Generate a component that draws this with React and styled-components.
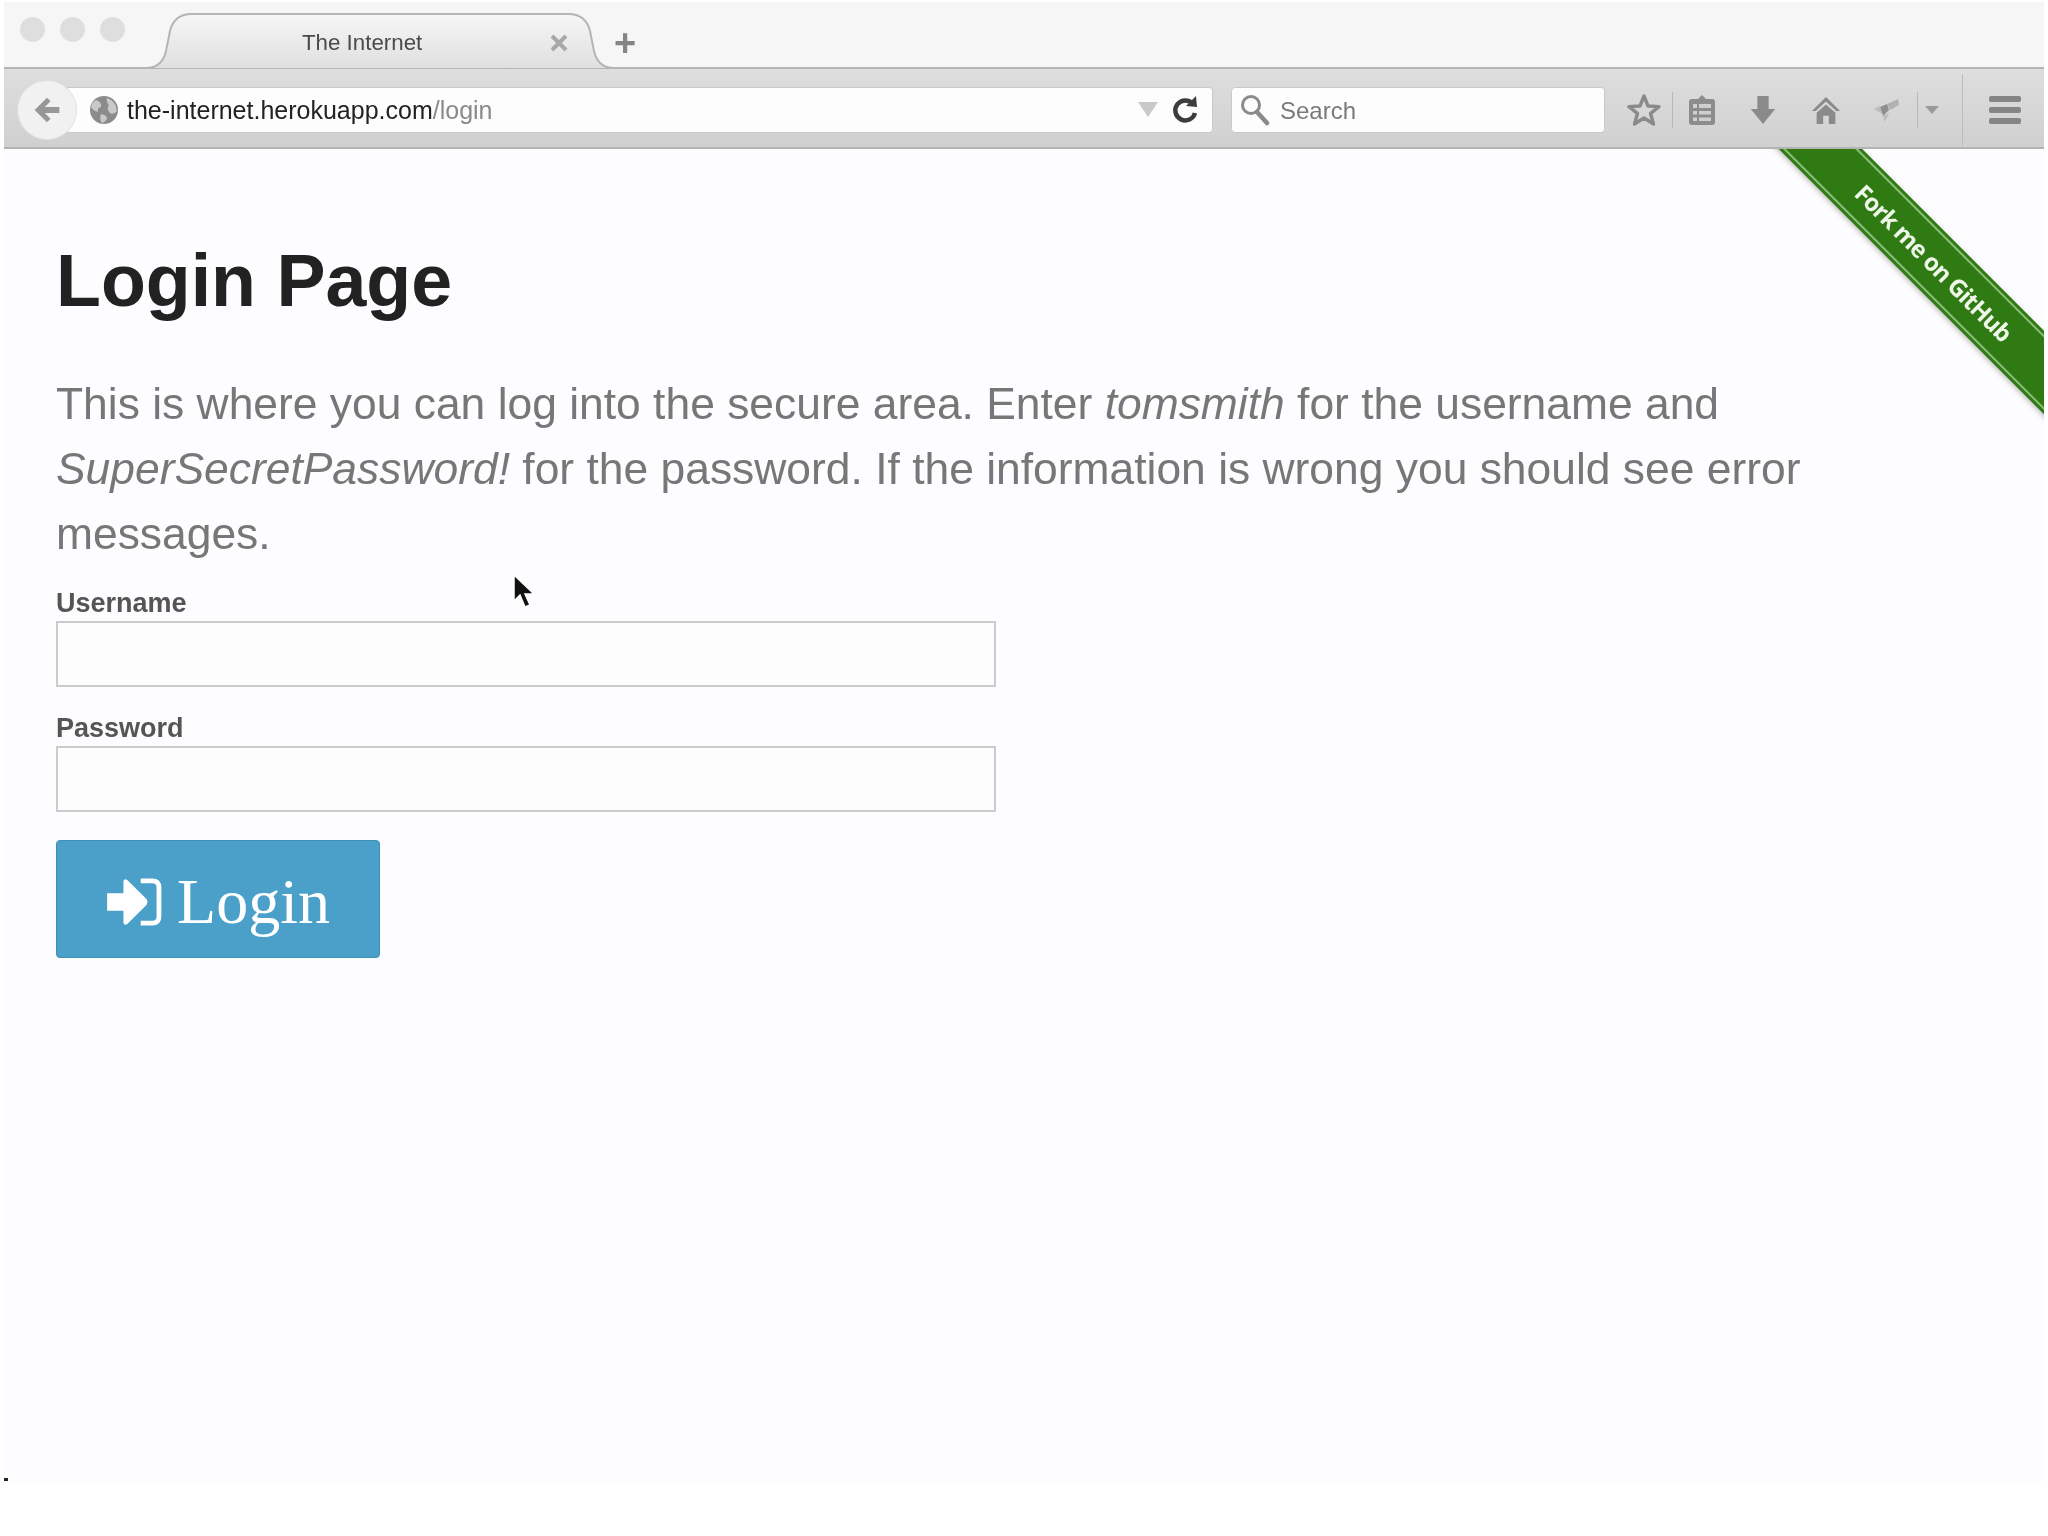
import React from "react";
import styled, { createGlobalStyle } from "styled-components";

const GlobalStyle = createGlobalStyle`
  html, body {
    margin: 0;
    padding: 0;
    background: #ffffff;
  }
  * {
    box-sizing: border-box;
  }
`;

const Arrow = ({ color = "#979797" }) => (
  <svg width="30" height="30" viewBox="0 0 34 34">
    <path d="M17 3 L3 17 L17 31 L21 27 L14.5 20.5 H31 V13.5 H14.5 L21 7 Z" fill={color} />
  </svg>
);

const Globe = () => (
  <svg width="30" height="30" viewBox="0 0 30 30">
    <circle cx="15" cy="15" r="14" fill="#8b8b8b" />
    <path d="M7 5 Q13 7 12 12 Q8 13 9 17 Q4 16 2 12 Q3 7 7 5 Z M18 3 Q27 6 28 16 Q25 20 21 18 Q17 14 20 10 Q17 7 18 3 Z M12 19 Q18 20 18 24 Q15 28 13 28 Q10 24 12 19 Z" fill="#c9c9c9" />
  </svg>
);

const Reload = () => (
  <svg width="26" height="28" viewBox="0 0 26 28">
    <path d="M21 8 A10 10 0 1 0 23 17" fill="none" stroke="#3d3d3d" strokeWidth="4.5" />
    <path d="M14 10 L25 11 L24 0 Z" fill="#3d3d3d" />
  </svg>
);

const Magnifier = () => (
  <svg width="30" height="32" viewBox="0 0 30 32">
    <circle cx="11" cy="11" r="8.5" fill="none" stroke="#8a8a8a" strokeWidth="3" />
    <path d="M17 18 L27 29" stroke="#8a8a8a" strokeWidth="4.5" strokeLinecap="round" />
  </svg>
);

const Star = () => (
  <svg width="34" height="34" viewBox="0 0 34 34">
    <path d="M17 3 L21 13 L32 13.6 L23.5 20.5 L26.5 31 L17 25 L7.5 31 L10.5 20.5 L2 13.6 L13 13 Z" fill="none" stroke="#8a8a8a" strokeWidth="3.4" strokeLinejoin="round" />
  </svg>
);

const Clipboard = () => (
  <svg width="28" height="32" viewBox="0 0 28 32">
    <path d="M10 5 L14 1 L18 5 H24 Q27 5 27 8 V28 Q27 31 24 31 H4 Q1 31 1 28 V8 Q1 5 4 5 Z" fill="#8c8c8c" />
    <path d="M5 10 H23 V14 H5 Z M5 17 H23 V20.5 H5 Z M5 23.5 H23 V27 H5 Z" fill="#cfcfcf" />
    <path d="M10 9 V28" stroke="#8c8c8c" strokeWidth="2" />
  </svg>
);

const Download = () => (
  <svg width="28" height="30" viewBox="0 0 28 32">
    <path d="M8 1 H20 V15 H27 L14 31 L1 15 H8 Z" fill="#8a8a8a" />
  </svg>
);

const Home = () => (
  <svg width="30" height="30" viewBox="0 0 32 32">
    <path d="M16 2 L31 17 L27 17 L16 7 L5 17 L1 17 Z" fill="#8a8a8a" />
    <path d="M16 10 L26 19 V31 H19 V22 H13 V31 H6 V19 Z" fill="#8a8a8a" />
  </svg>
);

const ExtensionMark = () => (
  <svg width="30" height="28" viewBox="0 0 30 28">
    <path d="M8 11 L15 8 L17 14 L11 20 Z" fill="#8f8f8f" />
    <path d="M15 8 L26 3 L27 9 L18 14 Z" fill="#b2b2b2" />
    <path d="M2 13 L8 10 L10 18 Z M11 20 L17 17 L13 26 Z" fill="#bcbcbc" />
  </svg>
);

const Cursor = () => (
  <svg width="22" height="36" viewBox="0 0 22 36">
    <path d="M1 1 L1 27 L7 21 L12 33 L17 31 L12 20 L21 20 Z" fill="#111" stroke="#fff" strokeWidth="1.5" />
  </svg>
);

const SignIn = () => (
  <svg width="56" height="48" viewBox="0 0 58 50">
    <path d="M1 16 H18 V3 Q19 0 22 2 L42 22 Q44 25 42 28 L22 48 Q19 50 18 47 V34 H1 Z" fill="#ffffff" />
    <path d="M36 3 H48 Q55 3 55 10 V40 Q55 47 48 47 H36" fill="none" stroke="#ffffff" strokeWidth="5" />
  </svg>
);

const CloseCross = () => (
  <svg width="18" height="18" viewBox="0 0 18 18">
    <path d="M2 2 L16 16 M16 2 L2 16" stroke="#a8a8a8" strokeWidth="4" />
  </svg>
);

const App = () => {
  return (
    <Window>
      <GlobalStyle />
      <TabStrip>
        <Lights>
          <Light />
          <Light />
          <Light />
        </Lights>
        <Tab>
          <TabShape viewBox="0 0 468 56" preserveAspectRatio="none">
            <defs>
              <linearGradient id="tabFill" x1="0" y1="0" x2="0" y2="1">
                <stop offset="0" stopColor="#f7f7f7" />
                <stop offset="1" stopColor="#dfdfdf" />
              </linearGradient>
            </defs>
            <path
              d="M0 55 Q16 55 20 38 L24 18 Q28 1 46 1 H422 Q440 1 444 18 L448 38 Q452 55 468 55"
              fill="url(#tabFill)"
              stroke="#b5b5b5"
              strokeWidth="2"
            />
          </TabShape>
          <TabTitle>The Internet</TabTitle>
          <TabClose>
            <CloseCross />
          </TabClose>
        </Tab>
        <NewTab>+</NewTab>
      </TabStrip>

      <Toolbar>
        <BackButton>
          <Arrow />
        </BackButton>
        <AddressBar>
          <Globe />
          <Url>
            the-internet.herokuapp.com<UrlPath>/login</UrlPath>
          </Url>
          <UrlDrop />
          <Reload />
        </AddressBar>
        <SearchBar>
          <Magnifier />
          <SearchText>Search</SearchText>
        </SearchBar>
        <Tools>
          <ToolSlot $width={56}>
            <Star />
          </ToolSlot>
          <ThinLine />
          <ToolSlot $width={58}>
            <Clipboard />
          </ToolSlot>
          <ToolSlot $width={64}>
            <Download />
          </ToolSlot>
          <ToolSlot $width={62}>
            <Home />
          </ToolSlot>
          <ToolSlot $width={60}>
            <ExtensionMark />
          </ToolSlot>
          <ThinLine />
          <ToolSlot $width={28}>
            <SmallDrop />
          </ToolSlot>
          <MenuLine />
          <MenuSlot>
            <MenuBar />
            <MenuBar />
            <MenuBar />
          </MenuSlot>
        </Tools>
      </Toolbar>

      <Page>
        <Ribbon>
          <RibbonText>Fork me on GitHub</RibbonText>
        </Ribbon>
        <Pointer>
          <Cursor />
        </Pointer>
        <Heading>Login Page</Heading>
        <Intro>
          This is where you can log into the secure area. Enter <em>tomsmith</em> for the
          username and <em>SuperSecretPassword!</em> for the password. If the information is
          wrong you should see error messages.
        </Intro>
        <Field>
          <Label>Username</Label>
          <TextBox />
        </Field>
        <Field>
          <Label>Password</Label>
          <TextBox />
        </Field>
        <LoginButton>
          <SignIn />
          Login
        </LoginButton>
        <Speck />
      </Page>
    </Window>
  );
};

export default App;

const Window = styled.div`
  width: 2048px;
  height: 1536px;
  padding: 2px 4px 0;
  background: #ffffff;
  overflow: hidden;
  font-family: "Liberation Sans", Arial, sans-serif;
  filter: blur(0.6px);
`;

const TabStrip = styled.div`
  height: 67px;
  display: flex;
  align-items: flex-start;
  padding-left: 16px;
  background: #f6f6f6;
  border-bottom: 2px solid #b5b5b5;
`;

const Lights = styled.div`
  display: flex;
  gap: 15px;
  padding-top: 15px;
`;

const Light = styled.span`
  width: 25px;
  height: 25px;
  border-radius: 50%;
  background: #dedede;
`;

const Tab = styled.div`
  position: relative;
  width: 468px;
  height: 56px;
  margin: 11px 0 0 21px;
  display: flex;
  align-items: center;
`;

const TabShape = styled.svg`
  position: absolute;
  inset: 0;
  width: 100%;
  height: 100%;
`;

const TabTitle = styled.span`
  position: relative;
  margin-left: 156px;
  font-size: 22.3px;
  color: #4a4a4a;
  padding-top: 4px;
`;

const TabClose = styled.span`
  position: relative;
  margin-left: 128px;
  padding-top: 4px;
  line-height: 0;
`;

const NewTab = styled.span`
  margin: 21px 0 0 0;
  font-size: 38px;
  line-height: 40px;
  font-weight: 700;
  color: #858585;
`;

const Toolbar = styled.div`
  height: 80px;
  display: flex;
  align-items: center;
  padding: 3px 0 0 13px;
  background: linear-gradient(#dedede, #d0d0d0);
  border-bottom: 2px solid #b4b4b4;
`;

const BackButton = styled.div`
  position: relative;
  z-index: 1;
  width: 60px;
  height: 60px;
  flex: none;
  display: flex;
  align-items: center;
  justify-content: center;
  border-radius: 50%;
  background: #f1f1f1;
  border: 1px solid #e0e0e0;
`;

const AddressBar = styled.div`
  width: 1146px;
  height: 46px;
  margin-left: -10px;
  padding: 0 14px 0 21px;
  display: flex;
  align-items: center;
  background: #fdfdfd;
  border: 1px solid #c9c9c9;
  border-radius: 0 4px 4px 0;
`;

const Url = styled.span`
  margin-left: 8px;
  padding-top: 2px;
  font-size: 25px;
  color: #222222;
`;

const UrlPath = styled.span`
  color: #8a8a8a;
`;

const UrlDrop = styled.span`
  margin-left: auto;
  margin-right: 14px;
  width: 0;
  height: 0;
  border-left: 10px solid transparent;
  border-right: 10px solid transparent;
  border-top: 15px solid #c9c9c9;
`;

const SearchBar = styled.div`
  width: 374px;
  height: 46px;
  margin-left: 18px;
  padding-left: 8px;
  display: flex;
  align-items: center;
  gap: 10px;
  background: #fdfdfd;
  border: 1px solid #c9c9c9;
  border-radius: 4px;
`;

const SearchText = styled.span`
  padding-top: 2px;
  font-size: 24px;
  color: #7a7a7a;
`;

const Tools = styled.div`
  display: flex;
  align-items: center;
  height: 100%;
  margin-left: 11px;
`;

const ToolSlot = styled.div`
  width: ${(p) => p.$width}px;
  flex: none;
  display: flex;
  align-items: center;
  justify-content: center;
`;

const ThinLine = styled.span`
  width: 1px;
  height: 36px;
  background: #b8b8b8;
`;

const SmallDrop = styled.span`
  width: 0;
  height: 0;
  border-left: 7px solid transparent;
  border-right: 7px solid transparent;
  border-top: 8px solid #9a9a9a;
`;

const MenuLine = styled.span`
  width: 1px;
  height: 72px;
  margin-left: 16px;
  background: #bdbdbd;
`;

const MenuSlot = styled.div`
  display: flex;
  flex-direction: column;
  gap: 5px;
  margin-left: 26px;
`;

const MenuBar = styled.span`
  width: 32px;
  height: 6px;
  border-radius: 2px;
  background: #858585;
`;

const Page = styled.main`
  position: relative;
  height: 1333px;
  padding: 92px 52px 0;
  background: #fdfcfe;
  overflow: hidden;
`;

const Ribbon = styled.div`
  position: absolute;
  left: 1680px;
  top: 84px;
  width: 500px;
  height: 59px;
  display: flex;
  align-items: center;
  justify-content: center;
  transform: rotate(45deg);
  background: #2f7a12;
  box-shadow: 0 2px 5px rgba(0, 0, 0, 0.25);

  &::before {
    content: "";
    position: absolute;
    inset: 3px 0;
    border-top: 2px solid #8dbb78;
    border-bottom: 2px solid #8dbb78;
  }
`;

const RibbonText = styled.span`
  position: relative;
  font-family: "Open Sans", sans-serif;
  font-size: 24px;
  letter-spacing: -0.9px;
  font-weight: 700;
  color: #eef7e8;
`;

const Pointer = styled.div`
  position: absolute;
  left: 509px;
  top: 425px;
  line-height: 0;
`;

const Heading = styled.h1`
  margin: 0 0 50px;
  font-size: 73.5px;
  line-height: 80px;
  font-weight: 700;
  color: #222222;
`;

const Intro = styled.p`
  width: 1800px;
  margin: 0 0 20px;
  font-size: 44.4px;
  line-height: 65px;
  color: #777777;
`;

const Field = styled.div`
  margin-bottom: 24px;
`;

const Label = styled.label`
  display: block;
  margin-bottom: 1px;
  font-size: 27px;
  line-height: 34px;
  font-weight: 700;
  color: #555555;
`;

const TextBox = styled.div`
  width: 940px;
  height: 66px;
  background: #fefdfe;
  border: 2px solid #cccccc;
`;

const LoginButton = styled.div`
  width: 324px;
  height: 118px;
  margin-top: 28px;
  padding-top: 5px;
  display: flex;
  align-items: center;
  justify-content: center;
  gap: 15px;
  font-family: "Liberation Serif", serif;
  font-size: 64px;
  color: #ffffff;
  background: #4aa0c8;
  border: 1px solid #3d8fb5;
  border-radius: 4px;
`;

const Speck = styled.span`
  position: absolute;
  left: 0;
  bottom: 1px;
  width: 4px;
  height: 3px;
  background: #222222;
`;
